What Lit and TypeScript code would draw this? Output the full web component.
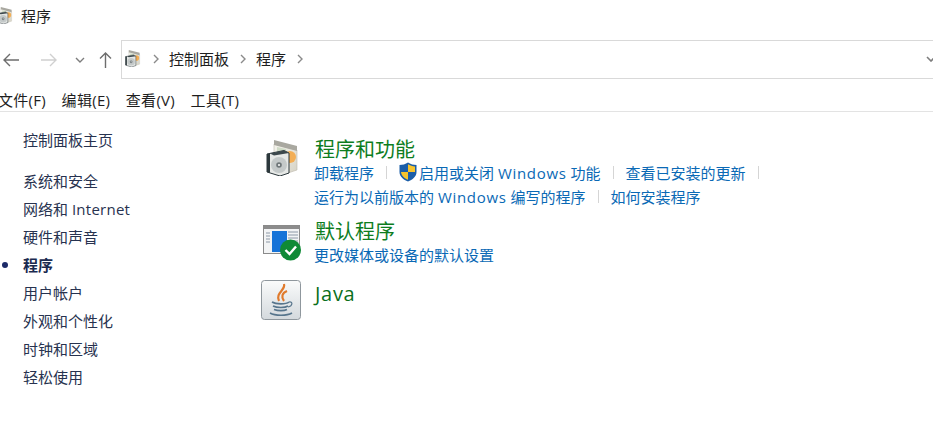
import { LitElement, html, css, svg } from 'lit';
import { customElement } from 'lit/decorators.js';

const programsIcon = (size: number) => html`
  <svg width=${size} height=${size} viewBox="0 0 36 36">
    <defs>
      <linearGradient id="box${size}" x1="0" y1="0" x2="1" y2="1">
        <stop offset="0" stop-color="#f6f5ee" />
        <stop offset="1" stop-color="#d6d3c6" />
      </linearGradient>
    </defs>
    <path d="M8 4 L31 10 L31 30 L22 33 L8 30 Z" fill="url(#box${size})" stroke="#bdb9ac" stroke-width=".6" />
    <path d="M8 0 L31 6 L31 11 L8 5 Z" fill="#a9a8a0" />
    <path d="M11 7 L20 9 L20 26 L11 26 Z" fill="#cfdac6" />
    <circle cx="24" cy="17" r="6" fill="#f3ae55" />
    <path d="M1 14 L18 10.5 L23 13 L23 33 L14 36 L1 32 Z" fill="#e6e8e6" stroke="#2c383c" stroke-width="1" />
    <path d="M1 14 L4 13.4 L4 33 L1 32 Z" fill="#2c383c" />
    <path d="M4 13.4 L18 10.5 L23 13 L8 15.5 Z" fill="#3c484c" />
    <circle cx="13" cy="25" r="8" fill="#c4c9c9" />
    <circle cx="13" cy="25" r="2.8" fill="#6f7779" />
    <circle cx="13" cy="25" r="1.1" fill="#f4f4f4" />
  </svg>
`;

const shieldIcon = html`
  <svg width="18" height="20" viewBox="0 0 18 20">
    <path d="M9 0.5 C11.5 2.2 14.5 3 17.5 3 L17.5 10 C17.5 14.5 13.5 17.8 9 19.5 C4.5 17.8 0.5 14.5 0.5 10 L0.5 3 C3.5 3 6.5 2.2 9 0.5 Z" fill="#1b5ea8" />
    <path d="M9 2.2 L9 10 L16 10 L16 4.4 C13.5 4.2 11 3.4 9 2.2 Z" fill="#f7c42d" />
    <path d="M9 10 L9 17.8 C5.4 16.3 2.3 13.8 2 10 Z" fill="#f7c42d" />
  </svg>
`;

const defaultsIcon = html`
  <svg width="38" height="36" viewBox="0 0 38 36">
    <rect x=".5" y=".5" width="36" height="28" fill="#f3f4f5" stroke="#8a8a8a" />
    <rect x="1" y="1" width="35" height="3" fill="#8c8c8c" />
    <rect x="9" y="6" width="15" height="21" fill="#1673d8" />
    <path d="M3 8h4M3 11h4M3 14h4M3 17h4M25 7h10M25 10h10M25 13h10M25 16h10" stroke="#8c98a6" stroke-width="1" />
    <circle cx="27.5" cy="25" r="10.5" fill="#0f8a36" />
    <path d="M22.5 25 L26.5 29 L33 21.5" fill="none" stroke="#fff" stroke-width="2.4" />
  </svg>
`;

const javaIcon = html`
  <svg width="40" height="40" viewBox="0 0 40 40">
    <defs>
      <linearGradient id="jv" x1="0" y1="0" x2="0" y2="1">
        <stop offset="0" stop-color="#fafbfb" />
        <stop offset="1" stop-color="#d4d9dd" />
      </linearGradient>
    </defs>
    <rect x=".5" y=".5" width="39" height="39" rx="3" fill="url(#jv)" stroke="#8f979d" />
    <path d="M23 4 C25 10 14 13 18 21 M26 11 C21 13 20 17 23 21" fill="none" stroke="#e07a2c" stroke-width="2.2" />
    <path d="M11 22 C15 24.5 25 24.5 28 22 M12 26 C16 28 24 28 27 26 M13 29.5 C17 31 23 31 26 29.5 M9 33 C14 36 26 36 31 33" fill="none" stroke="#57758c" stroke-width="1.6" />
    <path d="M28 22 C32 21 32 26 27 27" fill="none" stroke="#57758c" stroke-width="1.2" />
  </svg>
`;

const chevron = svg`<path d="M1 1 L5 5 L1 9" fill="none" stroke="#8a8a8a" stroke-width="1.4" />`;

@customElement('app-root')
export class AppRoot extends LitElement {
  static styles = css`
    :host {
      display: block;
      width: 933px;
      height: 445px;
      overflow: hidden;
      background: #fff;
      color: #1e1e1e;
      font-family: 'Open Sans', 'Noto Sans CJK SC', sans-serif;
      font-size: 15px;
    }
    .title {
      display: flex;
      align-items: center;
      gap: 7px;
      height: 34px;
      margin-left: -3px;
      padding-bottom: 4px;
      box-sizing: border-box;
    }
    .nav {
      display: flex;
      align-items: center;
      height: 39px;
      margin-top: 6px;
    }
    .nav-btns {
      display: flex;
      align-items: center;
      width: 121px;
      flex: none;
      padding-left: 2px;
      box-sizing: border-box;
    }
    .forward {
      margin-left: 20px;
    }
    .recent {
      margin-left: 17px;
    }
    .up {
      margin-left: 14px;
    }
    .address {
      flex: 1;
      display: flex;
      align-items: center;
      height: 39px;
      border: 1px solid #d9d9d9;
      border-right: none;
      padding: 0 0 2px 3px;
      box-sizing: border-box;
    }
    .crumb {
      display: flex;
      align-items: center;
      gap: 11px;
      margin-right: 9px;
    }
    .crumb svg {
      flex: none;
    }
    .drop {
      margin-left: auto;
      margin-right: -2px;
    }
    .menu {
      display: flex;
      gap: 15.5px;
      height: 33px;
      align-items: center;
      border-bottom: 1px solid #e3e3e3;
      margin-left: -2px;
      padding-top: 9px;
      box-sizing: border-box;
      letter-spacing: 0.3px;
    }
    .body {
      display: flex;
    }
    .side {
      width: 260px;
      flex: none;
      padding: 14px 0 0 23px;
      box-sizing: border-box;
      color: #27324f;
    }
    .side div {
      position: relative;
      height: 28px;
      line-height: 28px;
      white-space: nowrap;
    }
    .side .home {
      margin-bottom: 13px;
    }
    .side .cur {
      font-weight: 700;
      color: #1a2a50;
    }
    .side .cur::before {
      content: '';
      position: absolute;
      left: -21px;
      top: 11px;
      width: 6px;
      height: 6px;
      border-radius: 50%;
      background: #1c2a68;
    }
    .main {
      flex: 1;
      padding-top: 23px;
    }
    .cat {
      display: flex;
    }
    .cat-programs {
      height: 82px;
    }
    .cat-defaults {
      height: 63px;
    }
    .ico {
      flex: none;
      display: flex;
    }
    .ico-programs {
      width: 49px;
      padding: 5px 0 0 6px;
    }
    .ico-defaults {
      width: 52px;
      padding: 8px 0 0 3px;
    }
    .ico-java {
      width: 54px;
      padding-left: 1px;
    }
    .head {
      margin-top: 5px;
      font-size: 20px;
      line-height: 20px;
      color: #0d7d1e;
    }
    .head-java {
      margin-top: 0;
      line-height: 28px;
      color: #0b6f1c;
      letter-spacing: 0.7px;
    }
    .links {
      display: flex;
      align-items: center;
      height: 24px;
      margin-left: -1px;
      color: #0a69b5;
      white-space: pre;
    }
    .links .sep {
      width: 1px;
      height: 13px;
      background: #d5d5d5;
      margin: 0 12px;
    }
    .links svg {
      margin-right: 2px;
    }
    .win {
      letter-spacing: 0.7px;
    }
    .net {
      letter-spacing: 0.25px;
    }
  `;

  render() {
    return html`
      <div class="title">${programsIcon(17)}<span>程序</span></div>
      <div class="nav">
        <div class="nav-btns">
          <svg width="18" height="14" viewBox="0 0 18 14"><path d="M17 7 H2 M8 1 L2 7 L8 13" fill="none" stroke="#6d6d6d" stroke-width="1.4" /></svg>
          <svg class="forward" width="18" height="14" viewBox="0 0 18 14"><path d="M1 7 H16 M10 1 L16 7 L10 13" fill="none" stroke="#d0d0d0" stroke-width="1.4" /></svg>
          <svg class="recent" width="10" height="6" viewBox="0 0 10 6"><path d="M1 1 L5 5 L9 1" fill="none" stroke="#7d7d7d" stroke-width="1.4" /></svg>
          <svg class="up" width="13" height="18" viewBox="0 0 13 18"><path d="M6.5 17 V2 M1 7.5 L6.5 2 L12 7.5" fill="none" stroke="#6d6d6d" stroke-width="1.4" /></svg>
        </div>
        <div class="address">
          <span class="crumb">${programsIcon(17)}<svg width="7" height="10">${chevron}</svg></span>
          <span class="crumb">控制面板<svg width="7" height="10">${chevron}</svg></span>
          <span class="crumb">程序<svg width="7" height="10">${chevron}</svg></span>
          <svg class="drop" width="9" height="6" viewBox="0 0 9 6"><path d="M1 1 L5 5 L9 1" fill="none" stroke="#7d7d7d" stroke-width="1.6" /></svg>
        </div>
      </div>
      <div class="menu">
        <span>文件(F)</span><span>编辑(E)</span><span>查看(V)</span><span>工具(T)</span>
      </div>
      <div class="body">
        <div class="side">
          <div class="home">控制面板主页</div>
          <div>系统和安全</div>
          <div>网络和 <span class="net">Internet</span></div>
          <div>硬件和声音</div>
          <div class="cur">程序</div>
          <div>用户帐户</div>
          <div>外观和个性化</div>
          <div>时钟和区域</div>
          <div>轻松使用</div>
        </div>
        <div class="main">
          <div class="cat cat-programs">
            <div class="ico ico-programs">${programsIcon(36)}</div>
            <div>
              <div class="head">程序和功能</div>
              <div class="links">卸载程序<span class="sep"></span>${shieldIcon}<span>启用或关闭 <span class="win">Windows</span> 功能</span><span class="sep"></span>查看已安装的更新<span class="sep"></span></div>
              <div class="links"><span>运行为以前版本的 <span class="win">Windows</span> 编写的程序</span><span class="sep"></span>如何安装程序</div>
            </div>
          </div>
          <div class="cat cat-defaults">
            <div class="ico ico-defaults">${defaultsIcon}</div>
            <div>
              <div class="head">默认程序</div>
              <div class="links">更改媒体或设备的默认设置</div>
            </div>
          </div>
          <div class="cat">
            <div class="ico ico-java">${javaIcon}</div>
            <div><div class="head head-java">Java</div></div>
          </div>
        </div>
      </div>
    `;
  }
}
